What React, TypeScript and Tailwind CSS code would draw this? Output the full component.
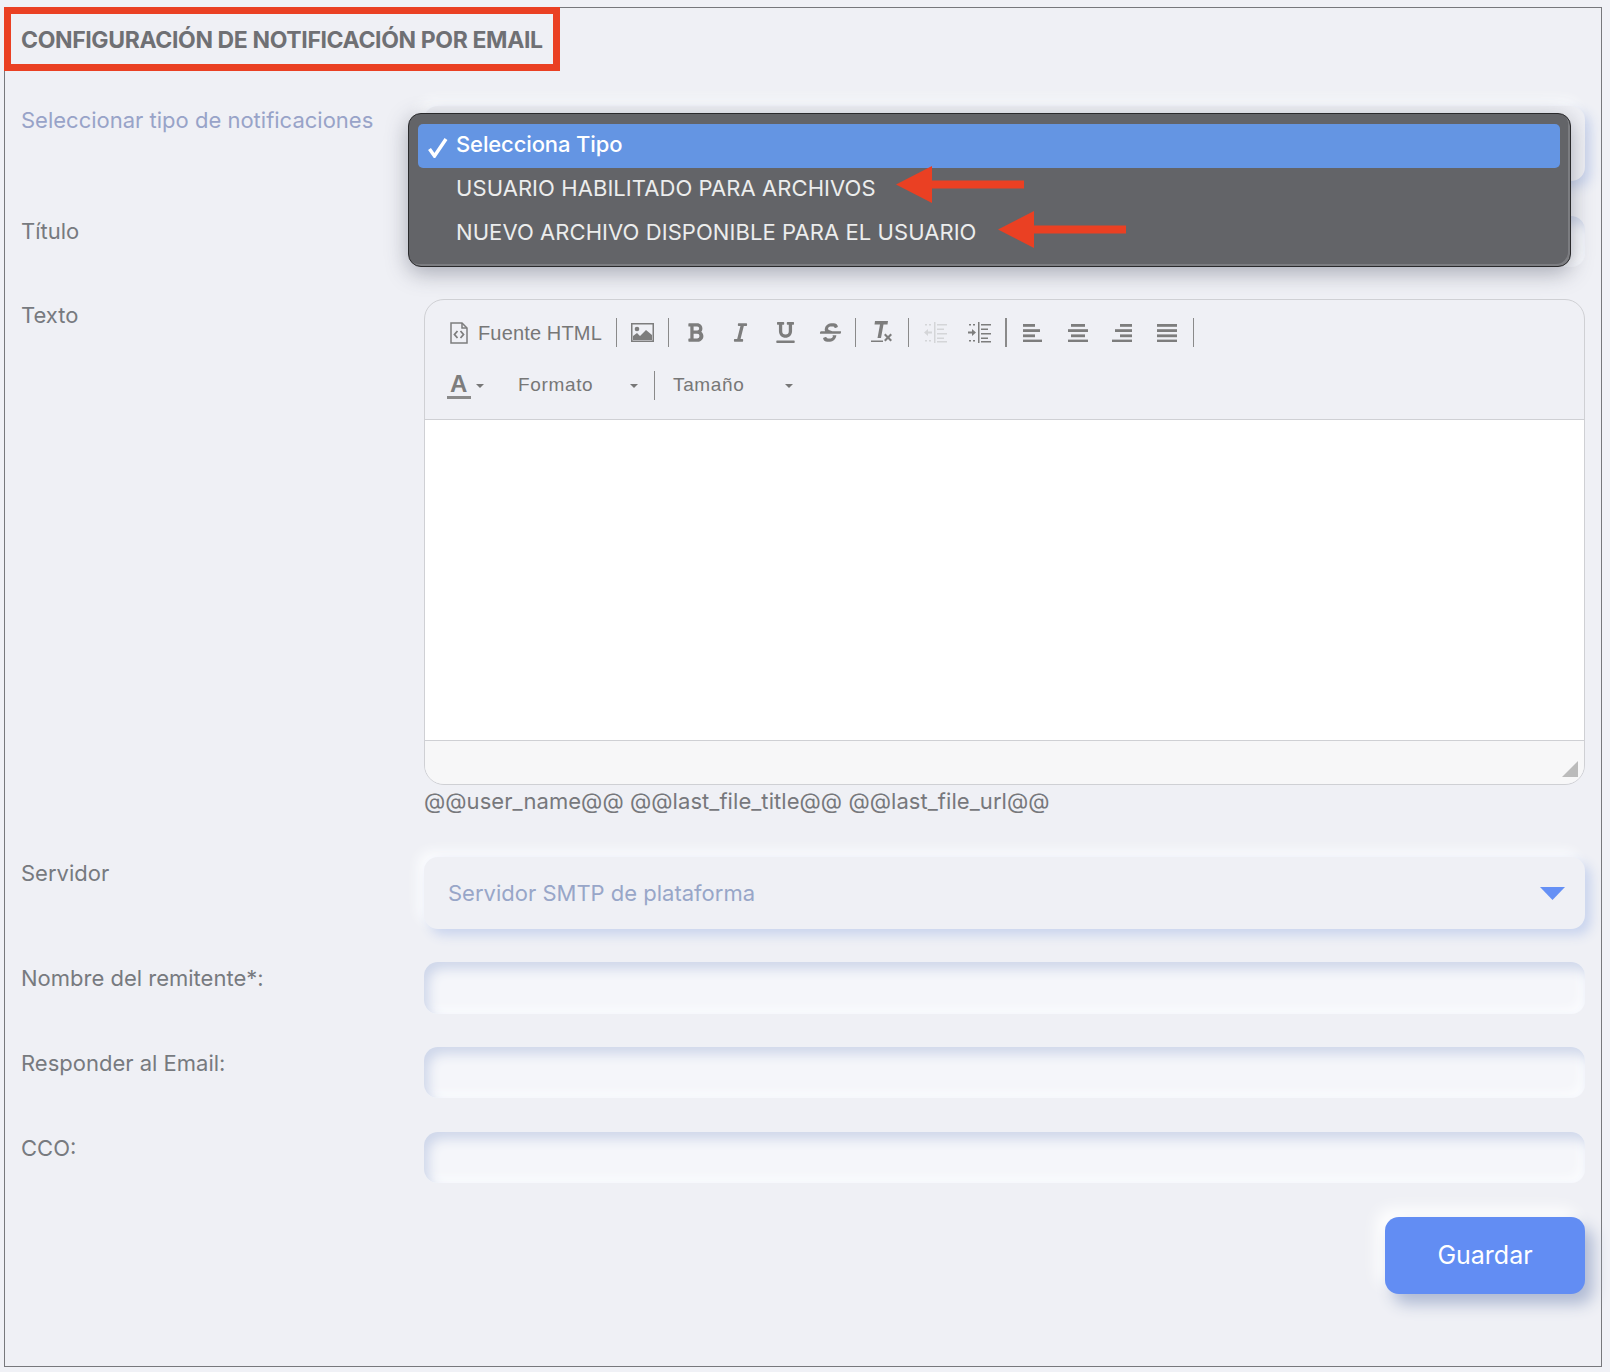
import type { ReactNode } from "react";
import { FaBold, FaItalic, FaStrikethrough, FaUnderline } from "react-icons/fa";

const inputClass =
    "h-full w-full rounded-[14px] bg-[#f5f6fa] shadow-[inset_5px_7px_12px_#cfd7ea,inset_-5px_-5px_9px_#fbfcfe]";

function Row({ label, labelClass, children }: { label: string; labelClass?: string; children: ReactNode }) {
    return (
        <div className="flex">
            <div className={`w-[403px] shrink-0 text-[22px] leading-[30px] ${labelClass ?? "pt-[1px] text-[#777a7f]"}`}>{label}</div>
            <div className="w-[1161px] shrink-0">{children}</div>
        </div>
    );
}

function Sep({ className }: { className?: string }) {
    return <div className={`h-[29px] shrink-0 bg-[#8a8a8a] ${className ?? "w-px"}`} />;
}

function Cell({ width, children }: { width: string; children: ReactNode }) {
    return <div className={`flex h-[29px] shrink-0 items-center justify-center text-[#7d7d7d] ${width}`}>{children}</div>;
}

function Caret({ className }: { className?: string }) {
    return (
        <svg width="8" height="4" viewBox="0 0 8 4" className={className}>
            <path d="M0 0h8L4 4z" fill="#777" />
        </svg>
    );
}

function AlignIcon({ lines }: { lines: [number, number][] }) {
    return (
        <svg width="20" height="18" viewBox="0 0 20 18">
            {lines.map(([x, w], i) => (
                <rect key={i} x={x} y={i * 5.2} width={w} height="2.8" fill="#7d7d7d" />
            ))}
        </svg>
    );
}

function IndentIcon({ out, color }: { out?: boolean; color: string }) {
    return (
        <svg width="23" height="22" viewBox="0 0 23 22" fill={color}>
            <rect x="10" y="0" width="1.5" height="21" />
            <rect x="13" y="2" width="10" height="1.5" />
            <rect x="13" y="6.5" width="7" height="1.5" />
            <rect x="13" y="11" width="10" height="1.5" />
            <rect x="13" y="15.5" width="7" height="1.5" />
            <rect x="13" y="19" width="10" height="1.5" />
            <rect x="1" y="2" width="2" height="1.5" />
            <rect x="5" y="2" width="2" height="1.5" />
            <rect x="1" y="18" width="2" height="1.5" />
            <rect x="5" y="18" width="2" height="1.5" />
            {out ? <path d="M0 10.5l4-3.5v2.5h4v2H4V14z" /> : <path d="M8 10.5L4 7v2.5H0v2h4V14z" />}
        </svg>
    );
}

function Toolbar() {
    return (
        <div className="h-[120px] border-b border-[#cfd0d4] pt-[18px]">
            <div className="flex items-center">
                <div className="flex h-[29px] w-[191px] shrink-0 items-center pl-[25px] text-[#777]">
                    <svg width="18" height="22" viewBox="0 0 18 22" fill="none" stroke="#7d7d7d" strokeWidth="1.5">
                        <path d="M1 1h11l5 5v15H1z" />
                        <path d="M12 1v5h5" />
                        <path d="M7.5 9L4.5 12.5l3 3.5M10.5 9l3 3.5-3 3.5" strokeWidth="1.8" />
                    </svg>
                    <span className="ml-[10px] font-['Liberation_Sans',sans-serif] text-[20px] tracking-[0.15px]">Fuente HTML</span>
                </div>
                <Sep />
                <Cell width="w-[51px]">
                    <svg width="23" height="19" viewBox="0 0 23 19">
                        <rect x="0.75" y="0.75" width="21.5" height="17.5" fill="none" stroke="#7d7d7d" strokeWidth="1.5" />
                        <circle cx="6" cy="6" r="2.3" fill="#7d7d7d" />
                        <path d="M2 17v-4l4-3 3 3 6-6 6 5v5z" fill="#7d7d7d" />
                    </svg>
                </Cell>
                <Sep />
                <div className="w-[4px] shrink-0" />
                <Cell width="w-[45px]"><FaBold size={21} /></Cell>
                <Cell width="w-[45px]"><FaItalic size={21} /></Cell>
                <Cell width="w-[45px]"><FaUnderline size={21} /></Cell>
                <Cell width="w-[45px]"><FaStrikethrough size={21} className="-skew-x-12" /></Cell>
                <div className="w-[2px] shrink-0" />
                <Sep />
                <Cell width="w-[52px]">
                    <svg width="22" height="23" viewBox="0 0 22 23" fill="#7d7d7d">
                        <path d="M4 0h13l-.5 3.5h-4L10 17H6.5L9 3.5H3.500z" />
                        <rect x="0" y="19.500" width="12" height="1.5" />
                        <path d="M13 14l1.500-1.500 2.500 2.500 2.500-2.500L21 14l-2.500 2.500L21 19l-1.500 1.500L17 18l-2.500 2.500L13 19l2.500-2.500z" />
                    </svg>
                </Cell>
                <Sep />
                <div className="w-[4px] shrink-0" />
                <Cell width="w-[44px]"><IndentIcon out color="#d4d5d8" /></Cell>
                <Cell width="w-[44px]"><IndentIcon color="#7d7d7d" /></Cell>
                <div className="w-[4px] shrink-0" />
                <Sep className="w-[2px]" />
                <div className="w-[4px] shrink-0" />
                <Cell width="w-[44.500px]"><AlignIcon lines={[[0, 12], [0, 17], [0, 12], [0, 19]]} /></Cell>
                <Cell width="w-[44.500px]"><AlignIcon lines={[[3, 14], [0, 20], [3, 14], [0, 20]]} /></Cell>
                <Cell width="w-[44.500px]"><AlignIcon lines={[[8, 12], [3, 17], [8, 12], [0, 20]]} /></Cell>
                <Cell width="w-[44.500px]"><AlignIcon lines={[[0, 20], [0, 20], [0, 20], [0, 20]]} /></Cell>
                <div className="w-[4px] shrink-0" />
                <Sep />
            </div>
            <div className="mt-[24px] flex h-[29px] items-center font-['Liberation_Sans',sans-serif] text-[19px] tracking-[0.65px] text-[#777]">
                <div className="ml-[22px] flex w-[24px] flex-col items-center">
                    <span className="text-[24px] leading-[22px] font-bold text-[#7d7d7d]">A</span>
                    <div className="mt-[1px] h-[3px] w-[24px] bg-[#8a8a8a]" />
                </div>
                <Caret className="ml-[5px]" />
                <span className="ml-[34px] w-[112px]">Formato</span>
                <Caret />
                <div className="ml-[16px] h-[29px] w-px bg-[#8a8a8a]" />
                <span className="ml-[18px] w-[112px]">Tamaño</span>
                <Caret />
            </div>
        </div>
    );
}

function Arrow({ className }: { className: string }) {
    return (
        <svg width="128" height="37" viewBox="0 0 128 37" className={`absolute ${className}`}>
            <path d="M0 18.500L36 0v14.500h92v8H36V37z" fill="#ea4023" />
        </svg>
    );
}

function Dropdown() {
    return (
        <div className="absolute top-[105px] left-[402.500px] h-[154px] w-[1163px] rounded-[13px] border border-[#2a2a2c] bg-[#636468] px-[9.500px] pt-[10px] text-[22px] leading-[40px] text-[#eceded] shadow-[0_6px_22px_rgba(60,65,85,0.4),inset_-2px_-2px_0_#7c7d81]">
            <div className="relative flex h-[44px] items-center rounded-[5px] bg-[#6495e3] pb-[4px] pl-[38px] font-medium tracking-[-0.12px] text-white">
                <svg width="20" height="20" viewBox="0 0 20 20" className="absolute top-[14px] left-[10px]">
                    <path d="M1.500 11l5 7L18 1" fill="none" stroke="#fff" strokeWidth="3.500" />
                </svg>
                Selecciona Tipo
            </div>
            <div className="h-[44px] pl-[38px] tracking-[0.07px]">USUARIO HABILITADO PARA ARCHIVOS</div>
            <div className="h-[44px] pl-[38px] tracking-[0.07px]">NUEVO ARCHIVO DISPONIBLE PARA EL USUARIO</div>
        </div>
    );
}

export default function App() {
    return (
        <div className="h-[1372px] overflow-hidden bg-[#f0f1f6] pt-[7px] pl-[4px] font-['Inter',sans-serif]">
            <div className="relative h-[1360px] w-[1598px] border border-[#77787c] bg-[#eff0f5] pl-[16px]">
                {/* Heading with the red annotation frame */}
                <div className="absolute -top-px -left-px h-[64px] w-[556px] border-[7px] border-[#ea4023]" />
                <div className="h-[98px] pt-[16px] text-[23px] leading-[32px] font-bold tracking-[-0.37px] text-[#6f7074]">
                    CONFIGURACIÓN DE NOTIFICACIÓN POR EMAIL
                </div>

                <Row label="Seleccionar tipo de notificaciones" labelClass="-mt-px text-[#98a3c8]">
                    <div className="h-[75px] rounded-[14px] bg-[#eff0f5] shadow-[6px_6px_12px_#ccd6ee,-6px_-6px_12px_#fbfcfe]" />
                </Row>
                <div className="mt-[35px]">
                    <Row label="Título" labelClass="text-[#777a7f]">
                        <div className="h-[51px]"><div className={inputClass} /></div>
                    </Row>
                </div>

                <div className="mt-[32px]">
                    <Row label="Texto">
                        <div className="relative flex h-[486px] flex-col overflow-hidden rounded-[20px] border border-[#cfd0d4]">
                            <Toolbar />
                            <div className="flex-1 bg-white" />
                            <div className="h-[44px] border-t border-[#cfd0d4] bg-[#f7f7f8]" />
                            <svg width="16" height="16" viewBox="0 0 16 16" className="absolute right-[6px] bottom-[7px]">
                                <path d="M16 0v16H0z" fill="#bbb" />
                            </svg>
                        </div>
                        <div className="h-[30px] text-[22px] leading-[32px] tracking-[0.06px] text-[#77787c]">@@user_name@@ @@last_file_title@@ @@last_file_url@@</div>
                    </Row>
                </div>

                <div className="mt-[42px]">
                    <Row label="Servidor">
                        <div className="flex h-[72px] items-center justify-between rounded-[14px] bg-[#eff0f5] pr-[20px] pl-[24px] text-[22px] text-[#98a6c8] shadow-[6px_6px_12px_#c9d4ee,-6px_-6px_12px_#fbfcfe]">
                            Servidor SMTP de plataforma
                            <svg width="25" height="13" viewBox="0 0 25 13">
                                <path d="M0 0h25L12.500 13z" fill="#6590f5" />
                            </svg>
                        </div>
                    </Row>
                </div>

                <div className="mt-[33px]">
                    <Row label="Nombre del remitente*:">
                        <div className="h-[52px]"><div className={inputClass} /></div>
                    </Row>
                </div>
                <div className="mt-[33px]">
                    <Row label="Responder al Email:">
                        <div className="h-[51px]"><div className={inputClass} /></div>
                    </Row>
                </div>
                <div className="mt-[34px]">
                    <Row label="CCO:">
                        <div className="h-[51px]"><div className={inputClass} /></div>
                    </Row>
                </div>

                <div className="mt-[34px] flex w-[1564px] justify-end">
                    <button className="h-[77px] w-[200px] rounded-[14px] bg-[#628df3] text-[25px] text-white shadow-[8px_10px_16px_#aeb9d3,-8px_-8px_16px_#ffffff]">
                        Guardar
                    </button>
                </div>

                <Dropdown />
                <Arrow className="top-[158px] left-[891px]" />
                <Arrow className="top-[203px] left-[993px]" />
            </div>
        </div>
    );
}
